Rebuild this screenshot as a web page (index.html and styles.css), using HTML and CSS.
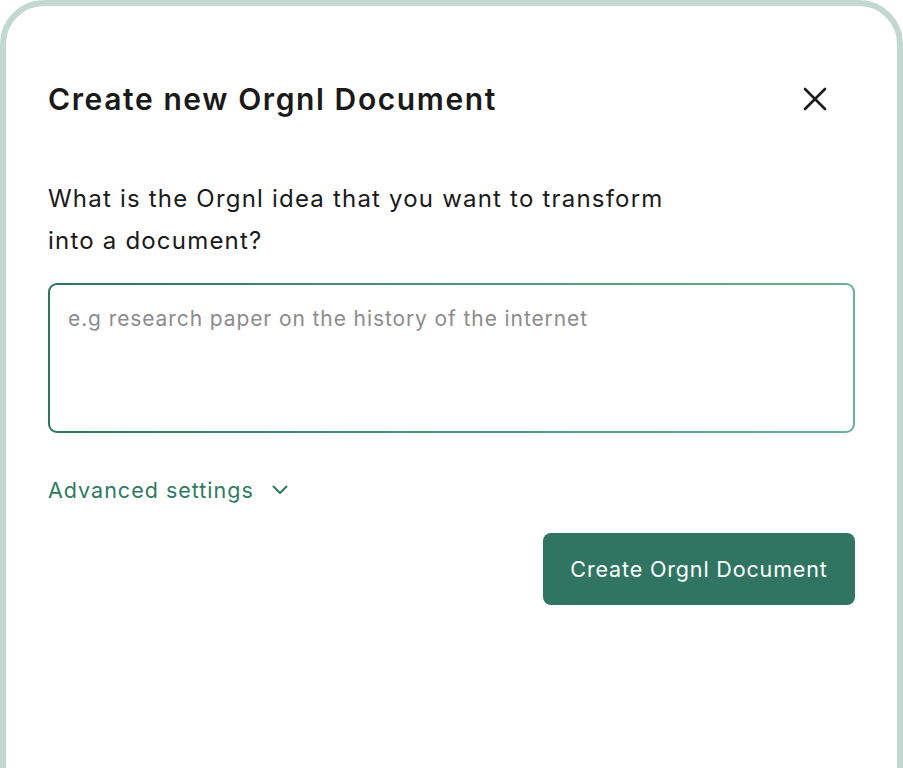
FILE: index.html
```html
<!DOCTYPE html>
<html lang="en">
<head>
<meta charset="utf-8">
<title>Create new Orgnl Document</title>
<link rel="stylesheet" href="styles.css">
</head>
<body>
<div class="frame">
  <div class="modal">
    <div class="header">
      <h1 class="title">Create new Orgnl Document</h1>
      <button class="close" aria-label="Close">
        <svg width="26" height="26" viewBox="0 0 26 26" fill="none" stroke="#1c1c1c" stroke-width="2.6" stroke-linecap="round"><path d="M3 3L23 23M23 3L3 23"/></svg>
      </button>
    </div>
    <p class="question">What is the Orgnl idea that you want to transform<br>into a document?</p>
    <div class="field">
      <textarea class="input" placeholder="e.g research paper on the history of the internet"></textarea>
    </div>
    <button class="advanced">Advanced settings
      <svg width="16" height="10" viewBox="0 0 16 10" fill="none" stroke="#2f7a62" stroke-width="2" stroke-linecap="round" stroke-linejoin="round"><path d="M1.5 1.5L8 8L14.5 1.5"/></svg>
    </button>
    <div class="actions">
      <button class="primary">Create Orgnl Document</button>
    </div>
  </div>
</div>
</body>
</html>
```
FILE: styles.css
```css
* { box-sizing: border-box; }
html, body { margin: 0; padding: 0; background: #fff; }
body {
  font-family: Inter, "Noto Sans", sans-serif;
  color: #1a1a1a;
}
.frame {
  width: 903px;
  min-height: 820px;
  border: 6px solid #c3d8d1;
  border-radius: 44px;
  background: #fff;
}
.modal {
  padding: 73px 42px 0 42px;
}
.header {
  display: flex;
  align-items: center;
  justify-content: space-between;
}
.title {
  margin: 0;
  font-size: 30px;
  font-weight: 600;
  line-height: 40px;
  letter-spacing: 1.6px;
}
.close {
  border: 0;
  background: none;
  padding: 0;
  margin-right: 27px;
  width: 26px;
  height: 26px;
  display: flex;
}
.question {
  margin: 58.5px 0 0 0;
  font-size: 24px;
  line-height: 42px;
  font-weight: 400;
  letter-spacing: 1.2px;
}
.field {
  margin-top: 21.5px;
  border: 2px solid transparent;
  border-radius: 9px;
  background: linear-gradient(#fff, #fff) padding-box,
              linear-gradient(90deg, #2d755f 0%, #4a977b 50%, #66b394 100%) border-box;
  height: 150px;
}
.input {
  display: block;
  width: 100%;
  height: 100%;
  border: 0;
  outline: none;
  resize: none;
  background: transparent;
  padding: 21px 18px;
  font-family: Inter, "Noto Sans", sans-serif;
  font-size: 21px;
  letter-spacing: 0.9px;
  color: #333;
}
.input::placeholder { color: #8c8c8c; }
.advanced {
  margin-top: 42px;
  border: 0;
  background: none;
  padding: 0;
  display: flex;
  align-items: center;
  gap: 18px;
  font-family: Inter, "Noto Sans", sans-serif;
  font-size: 21.5px;
  letter-spacing: 1px;
  color: #2f7a62;
  line-height: 30px;
}
.actions {
  display: flex;
  justify-content: flex-end;
  margin-top: 28px;
}
.primary {
  width: 312px;
  height: 72px;
  border: 0;
  border-radius: 8px;
  background: #2f7562;
  color: #fff;
  font-family: Inter, "Noto Sans", sans-serif;
  font-size: 21.5px;
  letter-spacing: 0.85px;
  font-weight: 400;
}
```
